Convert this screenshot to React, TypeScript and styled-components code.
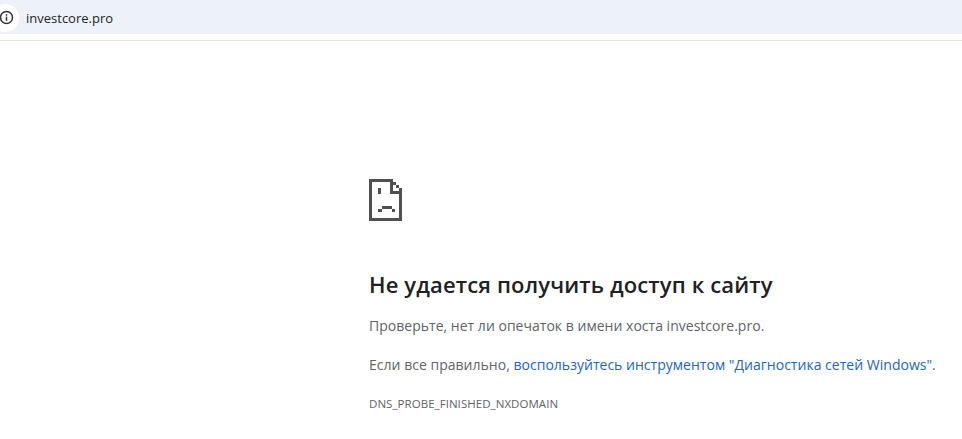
import styled, {createGlobalStyle} from "styled-components";

const GlobalStyle = createGlobalStyle`
    html, body {
        margin: 0;
        padding: 0;
        background: #fff;
    }
`;

const Page = styled.div`
    width: 962px;
    height: 439px;
    overflow: hidden;
    font-family: "Open Sans", "Noto Sans", sans-serif;
`;

const Toolbar = styled.div`
    height: 41px;
    box-sizing: border-box;
    border-bottom: 1px solid #e3e3e3;
    background: #fff;
`;

const AddressBar = styled.div`
    height: 34px;
    display: flex;
    align-items: center;
    background: #edf2fa;
`;

const SiteInfo = styled.div`
    flex: none;
    width: 28px;
    height: 28px;
    margin: 1px 0 0 -9px;
    display: flex;
    align-items: center;
    justify-content: center;
    padding-left: 2px;
    box-sizing: border-box;
    background: #fff;
    border-radius: 50%;
`;

const Url = styled.span`
    margin: 1px 0 0 7px;
    font-size: 13px;
    color: #1f1f1f;
`;

const Content = styled.main`
    padding: 138px 0 0 369px;
`;

const ErrorIcon = styled.svg`
    display: block;
    width: 33px;
    height: 42px;
    shape-rendering: crispEdges;
`;

const Title = styled.h1`
    margin: 48px 0 0;
    font-size: 22px;
    line-height: 30px;
    font-weight: 600;
    letter-spacing: 0.15px;
    color: #202124;
    white-space: nowrap;
`;

const Message = styled.p`
    margin: 0;
    font-size: 14px;
    line-height: 20px;
    color: #5f6368;
    white-space: nowrap;
    letter-spacing: 0.02px;
`;

const FirstMessage = styled(Message)`
    margin-top: 17px;
`;

const SecondMessage = styled(Message)`
    margin-top: 19px;
`;

const Link = styled.a`
    color: #1a66c4;
    text-decoration: none;
`;

const ErrorCode = styled.div`
    margin-top: 21px;
    font-size: 11.5px;
    line-height: 16px;
    letter-spacing: 0.05px;
    color: #5f6368;
    white-space: nowrap;
`;

export default function App() {
  return (
    <Page>
      <GlobalStyle/>
      <Toolbar>
        <AddressBar>
          <SiteInfo>
            <svg width="15" height="15" viewBox="0 0 15 15" fill="none">
              <circle cx="7.5" cy="7.5" r="6" stroke="#333" strokeWidth="1.5"/>
              <rect x="6.75" y="6.6" width="1.5" height="4.2" fill="#333"/>
              <rect x="6.75" y="4.2" width="1.5" height="1.5" fill="#333"/>
            </svg>
          </SiteInfo>
          <Url>investcore.pro</Url>
        </AddressBar>
      </Toolbar>
      <Content>
        <ErrorIcon viewBox="0 0 33 42">
          <g fill="#505050">
            <path d="M0 0h24v3H3v36h27V15H21V3h3v9h9v30H0z"/>
            <path d="M24 3h3v3h-3zM27 6h3v3h-3zM30 9h3v3h-3z"/>
            <path d="M9 9h3v6H9zM13 27h10v3H13zM9 30h4v3H9zM23 30h3v3h-3z"/>
          </g>
        </ErrorIcon>
        <Title>Не удается получить доступ к сайту</Title>
        <FirstMessage>Проверьте, нет ли опечаток в имени хоста investcore.pro.</FirstMessage>
        <SecondMessage>
          Если все правильно, <Link href="#">воспользуйтесь инструментом "Диагностика сетей Windows"</Link>.
        </SecondMessage>
        <ErrorCode>DNS_PROBE_FINISHED_NXDOMAIN</ErrorCode>
      </Content>
    </Page>
  );
}
